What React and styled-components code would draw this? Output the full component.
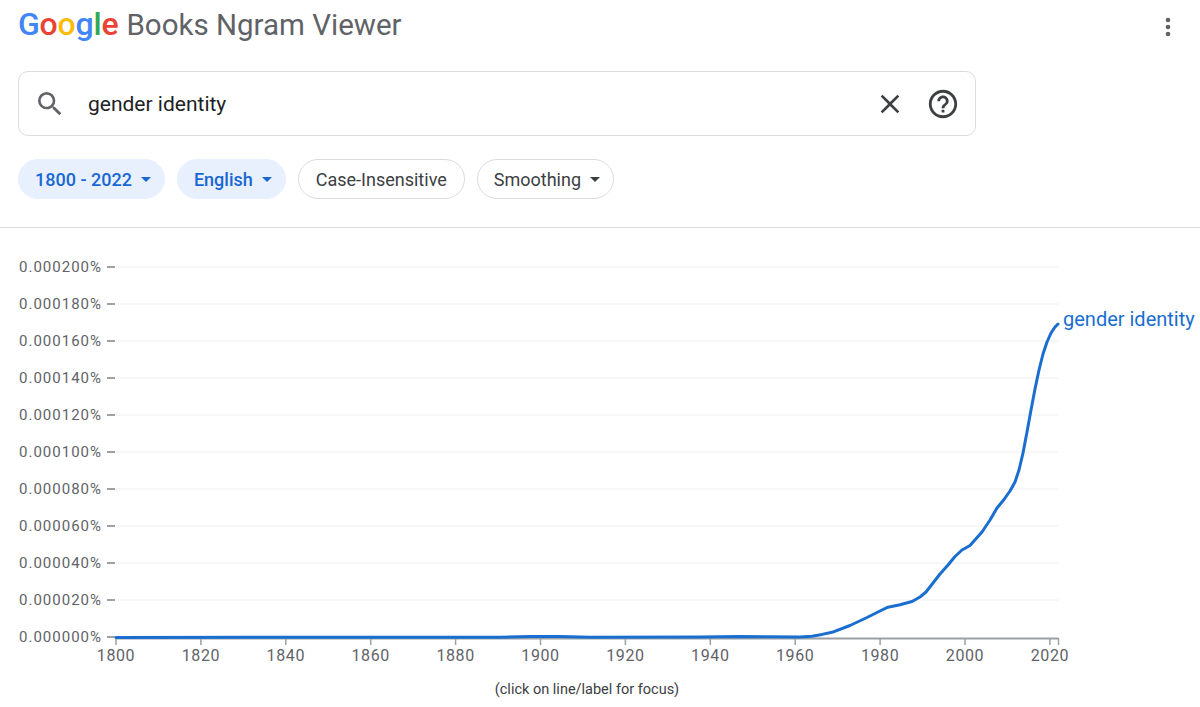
import React from "react";
import styled, { createGlobalStyle } from "styled-components";

const GlobalStyle = createGlobalStyle`
  html, body {
    margin: 0;
    padding: 0;
    background: #ffffff;
    font-family: Roboto, "Liberation Sans", Arial, sans-serif;
  }
`;

const Page = styled.div`
  width: 1200px;
  height: 707px;
  overflow: hidden;
  background: #fff;
`;

const Header = styled.header`
  display: flex;
  align-items: flex-start;
  justify-content: space-between;
  padding: 4px 18px 0 18px;
  height: 40px;
`;

const Brand = styled.div`
  display: flex;
  align-items: baseline;
  line-height: 40px;
  gap: 8px;
`;

const Logo = styled.span`
  font-size: 32px;
  font-weight: 500;
  letter-spacing: -0.2px;
`;

const Letter = styled.span`
  color: ${({ c }) => c};
`;

const Title = styled.span`
  font-size: 29.5px;
  color: #5f6368;
`;

const IconButton = styled.button`
  display: flex;
  align-items: center;
  justify-content: center;
  padding: 0;
  border: 0;
  background: none;
  color: ${({ dark }) => (dark ? "#3c4043" : "#5f6368")};
  margin-top: ${({ top }) => top || 0}px;
`;

const SearchBox = styled.div`
  box-sizing: border-box;
  width: 958px;
  height: 65px;
  margin: 27px 0 0 18px;
  border: 1px solid #dadce0;
  border-radius: 10px;
  display: flex;
  align-items: center;
  padding: 0 15px 0 15px;
`;

const Query = styled.div`
  flex: 1;
  margin-left: 22px;
  font-size: 21px;
  color: #202124;
`;

const Actions = styled.div`
  display: flex;
  align-items: center;
  gap: 20px;
`;

const ChipRow = styled.div`
  display: flex;
  gap: 12px;
  margin: 23px 0 0 18px;
`;

const Chip = styled.div`
  box-sizing: border-box;
  height: 40px;
  border-radius: 20px;
  display: flex;
  align-items: center;
  gap: 2px;
  font-size: 18px;
  padding: ${({ caret }) => (caret ? "0 6px 0 16px" : "0 17px")};
  background: ${({ active }) => (active ? "#e8f0fe" : "#fff")};
  border: 1px solid ${({ active }) => (active ? "#e8f0fe" : "#dadce0")};
  color: ${({ active }) => (active ? "#1967d2" : "#3c4043")};
  font-weight: ${({ active }) => (active ? 500 : 400)};
`;

const Divider = styled.hr`
  margin: 28px 0 0 0;
  border: 0;
  border-top: 1px solid #dadce0;
`;

const Chart = styled.svg`
  display: block;
  font-family: Roboto, "Liberation Sans", Arial, sans-serif;
`;

const Caption = styled.div`
  margin-left: 116px;
  width: 942px;
  text-align: center;
  font-size: 14.5px;
  line-height: 34px;
  color: #3c4043;
`;

const Caret = () => (
  <svg width="24" height="24" viewBox="0 0 24 24" fill="currentColor">
    <path d="M7 10l5 5 5-5z" />
  </svg>
);

const X0 = 116;
const PX_PER_YEAR = 4.245;
const yearX = (yr) => X0 + (yr - 1800) * PX_PER_YEAR;
const BASE = 637;
const STEP = 37;

const points = [
  [116, 637.4], [500, 637.2], [530, 636.4], [560, 636.6], [590, 637.3],
  [700, 637.1], [740, 636.5], [770, 636.8], [800, 636.9], [812, 636.2],
  [822, 634.4], [832, 632.3], [850, 625.5], [867, 617.5], [880, 611],
  [888, 607.2], [900, 604.8], [912, 601.5], [920, 597], [926, 592],
  [933, 583], [940, 574], [948, 565], [955, 556.5], [962, 550],
  [970, 545.5], [982, 532], [990, 520], [997, 508], [1004, 499.5],
  [1010, 491], [1015, 482], [1019, 470], [1023, 453], [1027, 432],
  [1031, 410], [1035, 389], [1039, 370], [1043, 354], [1047, 342],
  [1051, 333], [1055, 327], [1058, 324],
];

const linePath = points
  .map(([x, y], i) => `${i ? "L" : "M"}${x} ${y}`)
  .join(" ");

const yTicks = Array.from({ length: 11 }, (_, i) => i);
const xTicks = Array.from({ length: 12 }, (_, i) => 1800 + i * 20);

const NgramChart = () => (
  <Chart width="1200" height="445" viewBox="0 228 1200 445">
    {yTicks.map((i) => {
      const y = BASE - i * STEP;
      const pct = (i * 0.00002).toFixed(6);
      return (
        <g key={i}>
          {i > 0 && (
            <line x1={116} x2={1058} y1={y} y2={y} stroke="#eeeeee" strokeWidth="1" />
          )}
          <line x1={107} x2={115} y1={y} y2={y} stroke="#5f6368" strokeWidth="1.2" />
          <text
            x={102}
            y={y + 5}
            textAnchor="end"
            fontSize="15"
            letterSpacing="1"
            fill="#5f6368"
          >
            {pct}%
          </text>
        </g>
      );
    })}
    <line x1={116} x2={1058.5} y1={638.5} y2={638.5} stroke="#9aa0a6" strokeWidth="2" />
    {xTicks.map((yr) => (
      <g key={yr}>
        <line x1={yearX(yr)} x2={yearX(yr)} y1={638} y2={645} stroke="#9aa0a6" strokeWidth="1.5" />
        <text
          x={yearX(yr)}
          y={661}
          textAnchor="middle"
          fontSize="16"
          letterSpacing="0.6"
          fill="#5f6368"
        >
          {yr}
        </text>
      </g>
    ))}
    <line x1={1058.5} x2={1058.5} y1={638} y2={645} stroke="#9aa0a6" strokeWidth="1.5" />
    <path
      d={linePath}
      fill="none"
      stroke="#1a6ed0"
      strokeWidth="3"
      strokeLinejoin="round"
      strokeLinecap="round"
    />
    <text x={1063} y={326} fontSize="20" fill="#1a6ed0">
      gender identity
    </text>
  </Chart>
);

export default function App() {
  return (
    <Page>
      <GlobalStyle />
      <Header>
        <Brand>
          <Logo>
            <Letter c="#4285f4">G</Letter>
            <Letter c="#ea4335">o</Letter>
            <Letter c="#fbbc05">o</Letter>
            <Letter c="#4285f4">g</Letter>
            <Letter c="#34a853">l</Letter>
            <Letter c="#ea4335">e</Letter>
          </Logo>
          <Title>Books Ngram Viewer</Title>
        </Brand>
        <IconButton top={9} aria-label="More">
          <svg width="28" height="28" viewBox="0 0 24 24" fill="currentColor">
            <circle cx="12" cy="6" r="2" />
            <circle cx="12" cy="12" r="2" />
            <circle cx="12" cy="18" r="2" />
          </svg>
        </IconButton>
      </Header>

      <SearchBox>
        <IconButton aria-label="Search">
          <svg width="32" height="32" viewBox="0 0 24 24" fill="currentColor">
            <path d="M15.5 14h-.79l-.28-.27A6.471 6.471 0 0 0 16 9.5 6.5 6.5 0 1 0 9.5 16c1.61 0 3.090-.59 4.23-1.57l.27.28v.79l5 4.99L20.49 19l-4.99-5zm-6 0C7.01 14 5 11.99 5 9.5S7.01 5 9.5 5 14 7.01 14 9.5 11.99 14 9.5 14z" />
          </svg>
        </IconButton>
        <Query>gender identity</Query>
        <Actions>
          <IconButton dark aria-label="Clear">
            <svg width="32" height="32" viewBox="0 0 24 24" fill="currentColor">
              <path d="M19 6.41L17.59 5 12 10.59 6.41 5 5 6.41 10.59 12 5 17.59 6.41 19 12 13.41 17.59 19 19 17.59 13.41 12z" />
            </svg>
          </IconButton>
          <IconButton dark aria-label="Help">
            <svg width="34" height="34" viewBox="0 0 24 24" fill="currentColor">
              <path d="M11 18h2v-2h-2v2zm1-16C6.48 2 2 6.480 2 12s4.48 10 10 10 10-4.48 10-10S17.52 2 12 2zm0 18c-4.41 0-8-3.59-8-8s3.59-8 8-8 8 3.59 8 8-3.59 8-8 8zm0-14c-2.21 0-4 1.79-4 4h2c0-1.1.9-2 2-2s2 .9 2 2c0 2-3 1.75-3 5h2c0-2.25 3-2.5 3-5 0-2.21-1.79-4-4-4z" />
            </svg>
          </IconButton>
        </Actions>
      </SearchBox>

      <ChipRow>
        <Chip active caret>
          1800 - 2022
          <Caret />
        </Chip>
        <Chip active caret>
          English
          <Caret />
        </Chip>
        <Chip>Case-Insensitive</Chip>
        <Chip caret>
          Smoothing
          <Caret />
        </Chip>
      </ChipRow>

      <Divider />

      <NgramChart />
      <Caption>(click on line/label for focus)</Caption>
    </Page>
  );
}
